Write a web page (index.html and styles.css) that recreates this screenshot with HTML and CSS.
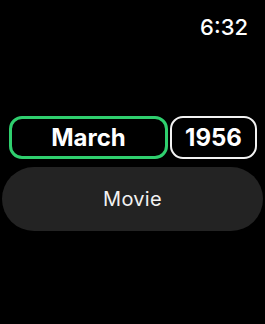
FILE: index.html
```html
<!DOCTYPE html>
<html lang="en">
<head>
  <meta charset="UTF-8">
  <meta name="viewport" content="width=device-width, initial-scale=1.0">
  <title>Date Picker</title>
  <link rel="stylesheet" href="styles.css">
</head>
<body>
  <div class="screen">
    <div class="status-bar">
      <span class="clock">6:32</span>
    </div>

    <div class="pickers">
      <div class="picker picker-month active">March</div>
      <div class="picker picker-year">1956</div>
    </div>

    <button class="category-btn">Movie</button>
  </div>
</body>
</html>
```

FILE: styles.css
```css
/* Watch screen */
body {
  font-family: Inter, "Noto Sans", sans-serif;
  background-color: #000;
  color: #fff;
  margin: 0;
  padding: 0;
}

.screen {
  width: 265px;
  height: 324px;
  box-sizing: border-box;
  padding: 0 2px;
}

.status-bar {
  display: flex;
  justify-content: flex-end;
  padding: 14px 15px 0 0;
  height: 26px;
}

.clock {
  font-size: 22px;
  font-weight: 500;
  line-height: 26px;
}

.pickers {
  display: flex;
  gap: 2px;
  margin: 76px 6px 0 7px;
}

.picker {
  box-sizing: border-box;
  height: 43px;
  border-radius: 13px;
  display: flex;
  align-items: center;
  justify-content: center;
  font-size: 24px;
  font-weight: 700;
}

.picker-month {
  width: 159px;
  border: 3px solid #2fcf6e;
}

.picker-year {
  width: 87px;
  border: 2px solid #f2f2f2;
}

.category-btn {
  display: block;
  width: 100%;
  height: 64px;
  margin-top: 8px;
  border: none;
  border-radius: 32px;
  background-color: #232323;
  color: #f2f2f2;
  font-family: Inter, "Noto Sans", sans-serif;
  font-size: 20px;
  font-weight: 400;
  letter-spacing: 0.3px;
}
```
